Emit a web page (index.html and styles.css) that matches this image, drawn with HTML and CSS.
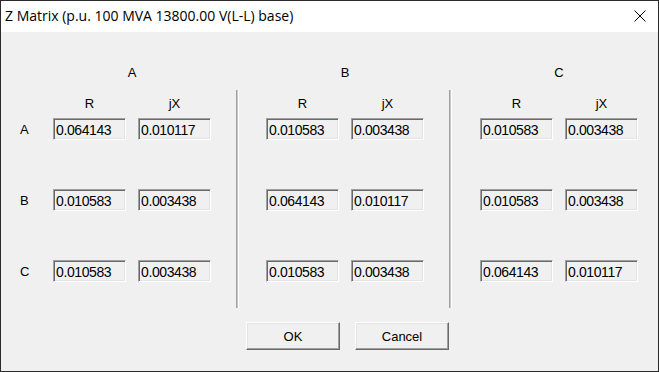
FILE: index.html
```html
<!DOCTYPE html>
<html lang="en">
<head>
    <meta charset="UTF-8">
    <meta name="viewport" content="width=device-width, initial-scale=1.0">
    <link rel="stylesheet" href="styles.css">
    <title>Z Matrix</title>
</head>
<body>
    <div class="window">
        <div class="titlebar">
            <span class="title">Z Matrix (p.u. 100 MVA 13800.00 V(L-L) base)</span>
            <svg class="close" width="12" height="12" viewBox="0 0 12 12">
                <path d="M0.5 0.5 L11.5 11.5 M11.5 0.5 L0.5 11.5" stroke="#000" stroke-width="1" fill="none"/>
            </svg>
        </div>

        <div class="dialog">
            <div class="matrix">
                <div class="row-labels">
                    <span>A</span>
                    <span>B</span>
                    <span>C</span>
                </div>

                <div class="group">
                    <div class="group-title">A</div>
                    <div class="sub">R</div>
                    <div class="sub">jX</div>
                    <div class="field">0.064143</div>
                    <div class="field">0.010117</div>
                    <div class="field">0.010583</div>
                    <div class="field">0.003438</div>
                    <div class="field">0.010583</div>
                    <div class="field">0.003438</div>
                </div>

                <div class="divider"></div>

                <div class="group">
                    <div class="group-title">B</div>
                    <div class="sub">R</div>
                    <div class="sub">jX</div>
                    <div class="field">0.010583</div>
                    <div class="field">0.003438</div>
                    <div class="field">0.064143</div>
                    <div class="field">0.010117</div>
                    <div class="field">0.010583</div>
                    <div class="field">0.003438</div>
                </div>

                <div class="divider last"></div>

                <div class="group">
                    <div class="group-title">C</div>
                    <div class="sub">R</div>
                    <div class="sub">jX</div>
                    <div class="field">0.010583</div>
                    <div class="field">0.003438</div>
                    <div class="field">0.010583</div>
                    <div class="field">0.003438</div>
                    <div class="field">0.064143</div>
                    <div class="field">0.010117</div>
                </div>
            </div>

            <div class="actions">
                <button>OK</button>
                <button>Cancel</button>
            </div>
        </div>
    </div>
</body>
</html>
```

FILE: styles.css
```css
body {
    margin: 0;
    background: #f0f0f0;
    font-family: 'Liberation Sans', Arial, sans-serif;
}

.window {
    width: 659px;
    height: 372px;
    box-sizing: border-box;
    border: 1px solid #2b2b2b;
    background: #f0f0f0;
}

.titlebar {
    height: 31px;
    background: #fff;
    display: flex;
    align-items: center;
    justify-content: space-between;
    padding: 0 12px 0 4px;
}

.title {
    font-family: 'Open Sans', 'Noto Sans', sans-serif;
    font-size: 14px;
    color: #000;
    padding-bottom: 2px;
}

.close {
    margin-bottom: 1px;
}

.dialog {
    height: 339px;
}

.matrix {
    display: flex;
    align-items: flex-start;
    height: 290px;
    padding-top: 34px;
    box-sizing: border-box;
    font-size: 13px;
    color: #000;
}

.row-labels {
    width: 33px;
    padding-left: 19px;
    margin-top: 52px;
    display: flex;
    flex-direction: column;
    gap: 49px;
}

.row-labels span {
    height: 22px;
    line-height: 24px;
}

.group {
    display: grid;
    grid-template-columns: 73px 73px;
    column-gap: 12px;
}

.group-title {
    grid-column: 1 / 3;
    text-align: center;
    line-height: 14px;
    height: 14px;
    margin-bottom: 17px;
}

.sub {
    text-align: center;
    line-height: 14px;
    height: 14px;
    margin-bottom: 7px;
}

.field {
    height: 22px;
    box-sizing: border-box;
    border-top: 1px solid #a0a0a0;
    border-left: 1px solid #a0a0a0;
    border-right: 1px solid #fff;
    border-bottom: 1px solid #fff;
    box-shadow: inset 1px 1px 0 #696969, inset -1px -1px 0 #e3e3e3;
    background: #f0f0f0;
    font-size: 14px;
    letter-spacing: -0.4px;
    line-height: 22px;
    padding-left: 2px;
    margin-bottom: 49px;
}

.group .field:nth-last-child(-n+2) {
    margin-bottom: 0;
}

.divider {
    width: 1px;
    height: 218px;
    margin: 24px 27px 0 25px;
    border-left: 1px solid #a0a0a0;
    border-right: 1px solid #fff;
    background: #c8c8c8;
}

.divider.last {
    margin-right: 28px;
}

.actions {
    display: flex;
    gap: 15px;
    padding-left: 245px;
}

button {
    width: 94px;
    height: 28px;
    font-family: 'Liberation Sans', Arial, sans-serif;
    font-size: 13px;
    color: #000;
    background: #f0f0f0;
    border-top: 1px solid #fff;
    border-left: 1px solid #fff;
    border-right: 1px solid #696969;
    border-bottom: 1px solid #696969;
    box-shadow: inset -1px -1px 0 #a0a0a0, inset 1px 1px 0 #e3e3e3;
    padding: 0;
}
```
